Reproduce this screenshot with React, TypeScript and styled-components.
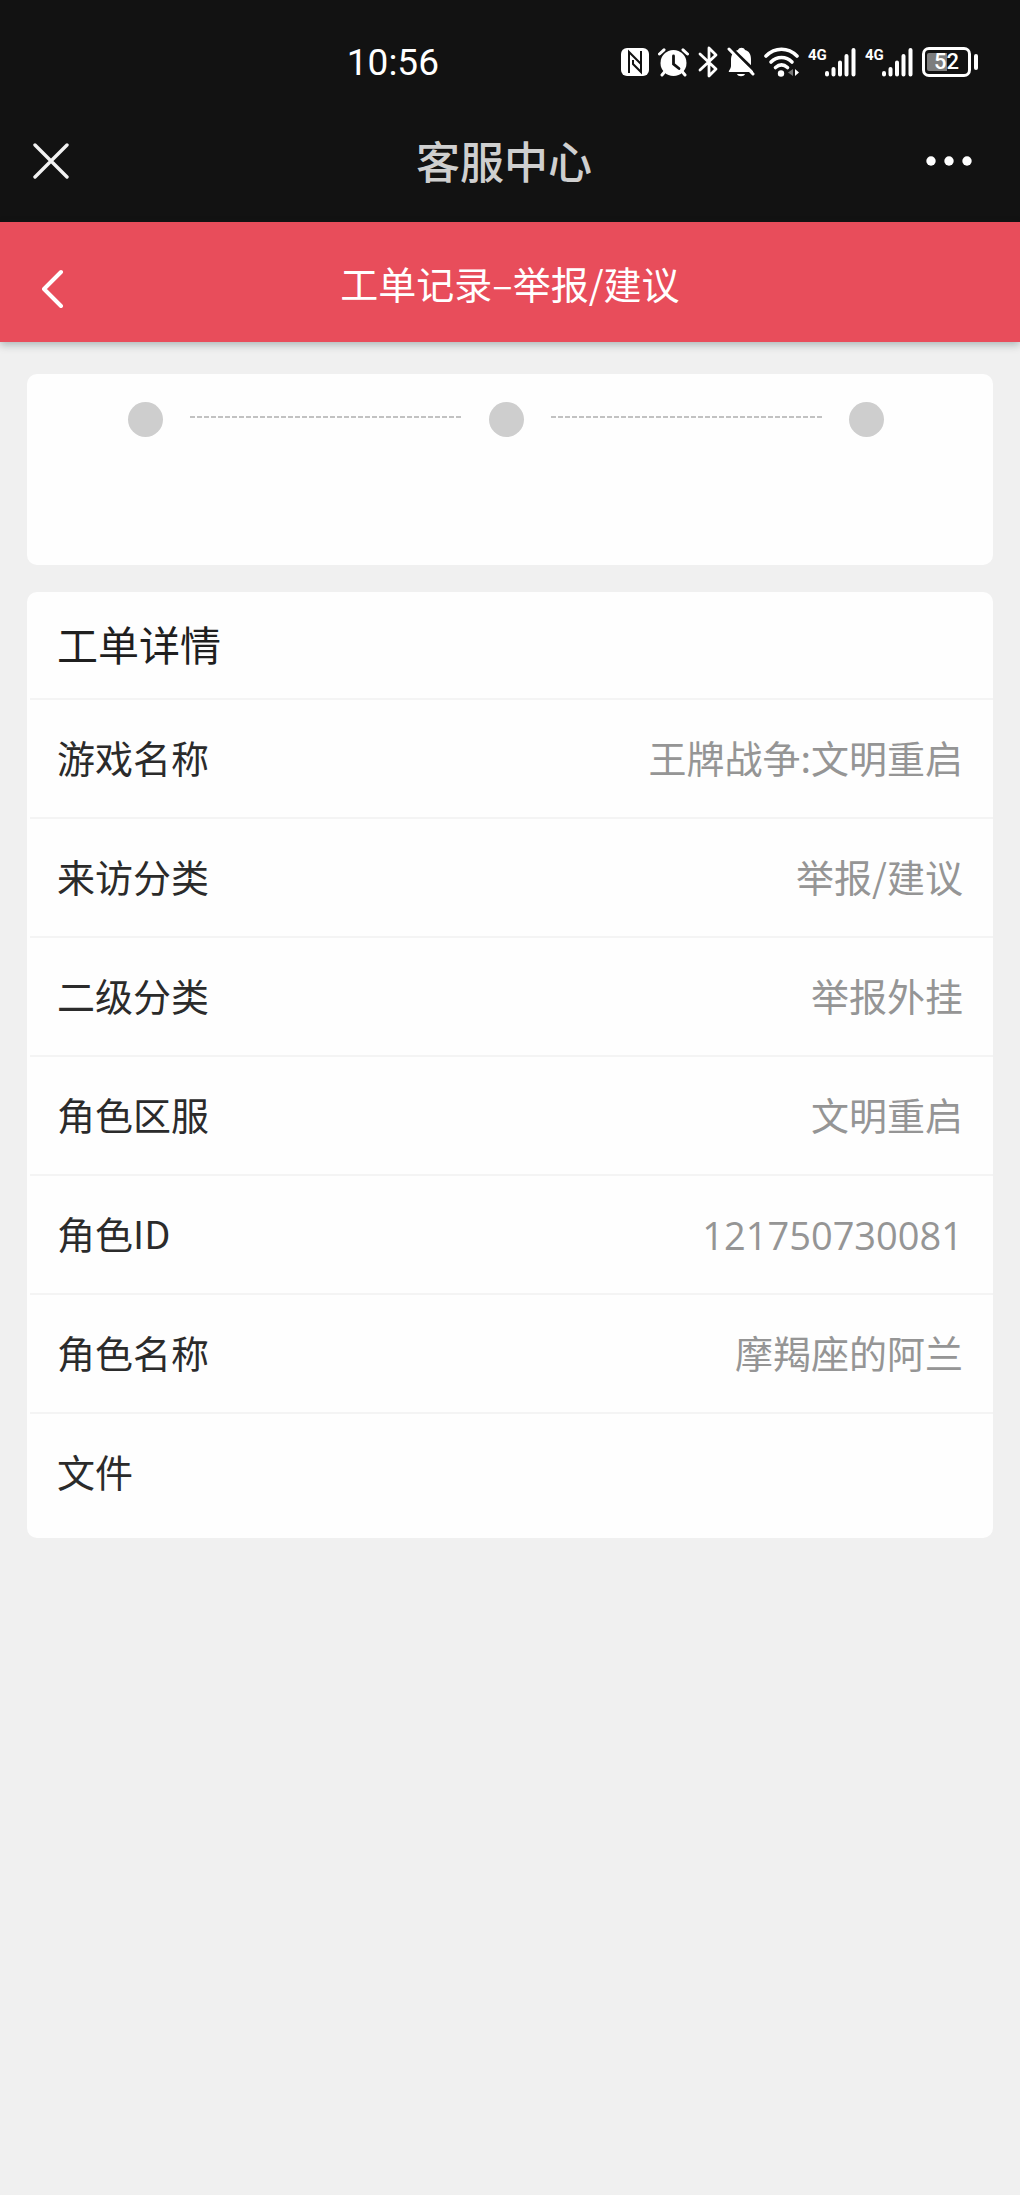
import React from "react";
import styled, { createGlobalStyle } from "styled-components";

const cjk = '"Noto Sans CJK SC", "Noto Sans", sans-serif';

const GlobalStyle = createGlobalStyle`
  *, *::before, *::after { box-sizing: border-box; }
  body { margin: 0; background: #f0f0f0; font-family: ${cjk}; }
  svg { display: block; }
`;

const Page = styled.div`
  min-height: 100vh;
  background: #f0f0f0;
`;

const StatusBar = styled.div`
  display: flex;
  align-items: center;
  height: 124px;
  padding: 0 42px 0 34%;
  background: #121212;
  color: #fff;
`;

const Clock = styled.time`
  padding-top: 2px;
  font: 400 37px/40px Roboto, sans-serif;
`;

const StatusIcons = styled.div`
  display: flex;
  align-items: center;
  gap: 9px;
  margin-left: auto;
`;

const Signal = styled.span`
  display: flex;
  align-items: flex-start;
  height: 30px;
`;

const Network = styled.span`
  width: 17px;
  font: 700 15px/16px Roboto, sans-serif;
`;

const Battery = styled.span`
  display: flex;
  align-items: center;
  gap: 3px;
`;

const BatteryBody = styled.span`
  width: 49px;
  height: 30px;
  border: 3px solid #fff;
  border-radius: 7px;
  padding: 3px 2px;
`;

const BatteryLevel = styled.span`
  display: block;
  width: 100%;
  height: 18px;
  background: linear-gradient(to right, #7d7d7d 52%, transparent 52%);
  border-radius: 2px;
  font: 500 22px/18px Roboto, sans-serif;
  text-align: center;
`;

const BatteryTip = styled.span`
  width: 4px;
  height: 16px;
  border-radius: 2px;
  background: #fff;
`;

const AppBar = styled.div`
  display: grid;
  grid-template-columns: 1fr auto 1fr;
  align-items: center;
  height: 98px;
  padding: 0 45px 24px 33px;
  background: #121212;
`;

const AppTitle = styled.div`
  padding-bottom: 2px;
  color: #cfcfcf;
  font-size: 44px;
  font-weight: 500;
  line-height: 60px;
`;

const IconButton = styled.button<{ $end?: boolean }>`
  justify-self: ${(p) => (p.$end ? "end" : "start")};
  padding: 0;
  border: 0;
  background: none;
  color: #fff;
  cursor: pointer;
`;

const PageHeader = styled.header`
  display: grid;
  grid-template-columns: 1fr auto 1fr;
  align-items: center;
  height: 120px;
  padding: 2px 42px 0;
  background: #e84d5b;
  box-shadow: 0 3px 8px rgba(0, 40, 40, 0.28);
`;

const PageTitle = styled.h1`
  margin: 0;
  color: #fff;
  font-size: 38px;
  font-weight: 400;
  line-height: 56px;
`;

const Content = styled.main`
  display: flex;
  flex-direction: column;
  gap: 27px;
  padding: 32px 27px;
`;

const Card = styled.section`
  border-radius: 10px;
  background: #fefefe;
`;

const Steps = styled.ol`
  display: flex;
  align-items: flex-start;
  min-height: 191px;
  margin: 0;
  padding: 28px 109px 0 101px;
  list-style: none;
`;

const Step = styled.li<{ $first?: boolean }>`
  display: flex;
  flex: ${(p) => (p.$first ? "none" : "1")};
`;

const Dot = styled.span`
  width: 35px;
  height: 35px;
  border-radius: 50%;
  background: #cecece;
`;

const Connector = styled.span`
  flex: 1;
  height: 2px;
  margin: 14px 27px 0;
  background: repeating-linear-gradient(to right, #c2c2c2 0 5px, transparent 5px 7px);
`;

const CardTitle = styled.h2`
  display: flex;
  align-items: center;
  height: 106px;
  margin: 0;
  padding: 0 30px 4px;
  color: #1f1f1f;
  font-size: 41px;
  font-weight: 400;
  line-height: 56px;
`;

const Details = styled.dl`
  margin: 0;
  padding-bottom: 7px;
`;

const Row = styled.div`
  display: flex;
  align-items: center;
  justify-content: space-between;
  height: 119px;
  margin-left: 3px;
  padding: 0 30px 4px 27px;
  border-top: 2px solid #f4f4f4;
  font-size: 38px;
  line-height: 56px;
`;

const Label = styled.dt`
  color: #2b2b2b;
`;

const Value = styled.dd<{ $numeric?: boolean }>`
  margin: 0;
  padding-top: ${(p) => (p.$numeric ? "4px" : "0")};
  color: #959595;
  font-family: ${(p) => (p.$numeric ? '"Open Sans", ' : "")}${cjk};
`;

const NfcIcon = () => (
  <svg width="28" height="28" viewBox="0 0 28 28" aria-hidden="true">
    <rect width="28" height="28" rx="6" fill="#fff" />
    <path d="M8 25V4l12 12M20 3v21L12 16v-4" fill="none" stroke="#121212" strokeWidth="2" />
  </svg>
);

const AlarmIcon = () => (
  <svg width="31" height="29" viewBox="0 0 31 29" aria-hidden="true">
    <circle cx="15.5" cy="15" r="13" fill="#fff" />
    <path d="M1.500 6L6 1.800M29.500 6L25 1.800M6.500 24L4 27M24.500 24L27 27" stroke="#fff" strokeWidth="3" strokeLinecap="round" />
    <path d="M15.500 8v8l5.500 4.500" fill="none" stroke="#121212" strokeWidth="2.8" strokeLinecap="round" />
  </svg>
);

const BluetoothIcon = () => (
  <svg width="20" height="32" viewBox="0 0 20 32" aria-hidden="true">
    <path d="M2 8l16 15-7 7V2l7 7L2 24" fill="none" stroke="#fff" strokeWidth="2.8" strokeLinecap="round" strokeLinejoin="round" />
  </svg>
);

const MutedBellIcon = () => (
  <svg width="28" height="30" viewBox="0 0 28 30" aria-hidden="true">
    <path d="M2 25c-1-1 2-3 2-6v-6C4 7 7 4 11 3c1-3 6-3 7 0 4 1 6 4 6 10v6c0 3 3 5 2 6z" fill="#fff" />
    <path d="M10 27h8c-1 3-7 3-8 0z" fill="#fff" />
    <path d="M3 0l25 24" stroke="#121212" strokeWidth="3" />
    <path d="M2 2l24 25" stroke="#fff" strokeWidth="3" strokeLinecap="round" />
  </svg>
);

const WifiIcon = () => (
  <svg width="35" height="30" viewBox="0 0 35 30" aria-hidden="true">
    <g fill="none" stroke="#fff" strokeWidth="3.6" strokeLinecap="round">
      <path d="M2 9c9-9 22-9 31 0" />
      <path d="M7 15c6-6 15-6 21 0" />
      <path d="M11.500 20.500c4-3.500 8-3.500 12 0" />
    </g>
    <circle cx="17" cy="26.500" r="3.2" fill="#fff" />
    <path d="M29 22v7l-5-3.500z" fill="#777" />
    <path d="M31 22v7l4-3.500z" fill="#fff" />
  </svg>
);

const MobileSignal = () => (
  <Signal>
    <Network>4G</Network>
    <svg width="31" height="30" viewBox="0 0 31 30" aria-hidden="true">
      <path d="M2 27.500V26M8.500 27.500V22M15 27.500V15.500M21.500 27.500V9M28.500 27.500V3" stroke="#fff" strokeWidth="4" strokeLinecap="round" />
    </svg>
  </Signal>
);

const rows: { label: string; value: string; numeric?: boolean }[] = [
  { label: "游戏名称", value: "王牌战争:文明重启" },
  { label: "来访分类", value: "举报/建议" },
  { label: "二级分类", value: "举报外挂" },
  { label: "角色区服", value: "文明重启" },
  { label: "角色ID", value: "121750730081", numeric: true },
  { label: "角色名称", value: "摩羯座的阿兰" },
  { label: "文件", value: "" },
];

export default function App() {
  return (
    <Page>
      <GlobalStyle />
      <StatusBar>
        <Clock>10:56</Clock>
        <StatusIcons>
          <NfcIcon />
          <AlarmIcon />
          <BluetoothIcon />
          <MutedBellIcon />
          <WifiIcon />
          <MobileSignal />
          <MobileSignal />
          <Battery>
            <BatteryBody>
              <BatteryLevel>52</BatteryLevel>
            </BatteryBody>
            <BatteryTip />
          </Battery>
        </StatusIcons>
      </StatusBar>
      <AppBar>
        <IconButton type="button" aria-label="关闭">
          <svg width="36" height="36" viewBox="0 0 36 36" aria-hidden="true">
            <path d="M2 2l32 32M34 2L2 34" stroke="#f2f2f2" strokeWidth="3.4" strokeLinecap="round" />
          </svg>
        </IconButton>
        <AppTitle>客服中心</AppTitle>
        <IconButton type="button" aria-label="更多" $end>
          <svg width="50" height="36" viewBox="0 0 50 36" aria-hidden="true" fill="#fff">
            <circle cx="6" cy="18" r="4.7" />
            <circle cx="24" cy="18" r="4.7" />
            <circle cx="42" cy="18" r="4.7" />
          </svg>
        </IconButton>
      </AppBar>
      <PageHeader>
        <IconButton type="button" aria-label="返回">
          <svg width="22" height="52" viewBox="0 0 22 52" aria-hidden="true">
            <path d="M19 15L2 32l17 17" fill="none" stroke="#fff" strokeWidth="4" strokeLinecap="round" strokeLinejoin="round" />
          </svg>
        </IconButton>
        <PageTitle>工单记录–举报/建议</PageTitle>
      </PageHeader>
      <Content>
        <Card>
          <Steps>
            <Step $first>
              <Dot />
            </Step>
            <Step>
              <Connector />
              <Dot />
            </Step>
            <Step>
              <Connector />
              <Dot />
            </Step>
          </Steps>
        </Card>
        <Card>
          <CardTitle>工单详情</CardTitle>
          <Details>
            {rows.map((row) => (
              <Row key={row.label}>
                <Label>{row.label}</Label>
                <Value $numeric={row.numeric}>{row.value}</Value>
              </Row>
            ))}
          </Details>
        </Card>
      </Content>
    </Page>
  );
}
